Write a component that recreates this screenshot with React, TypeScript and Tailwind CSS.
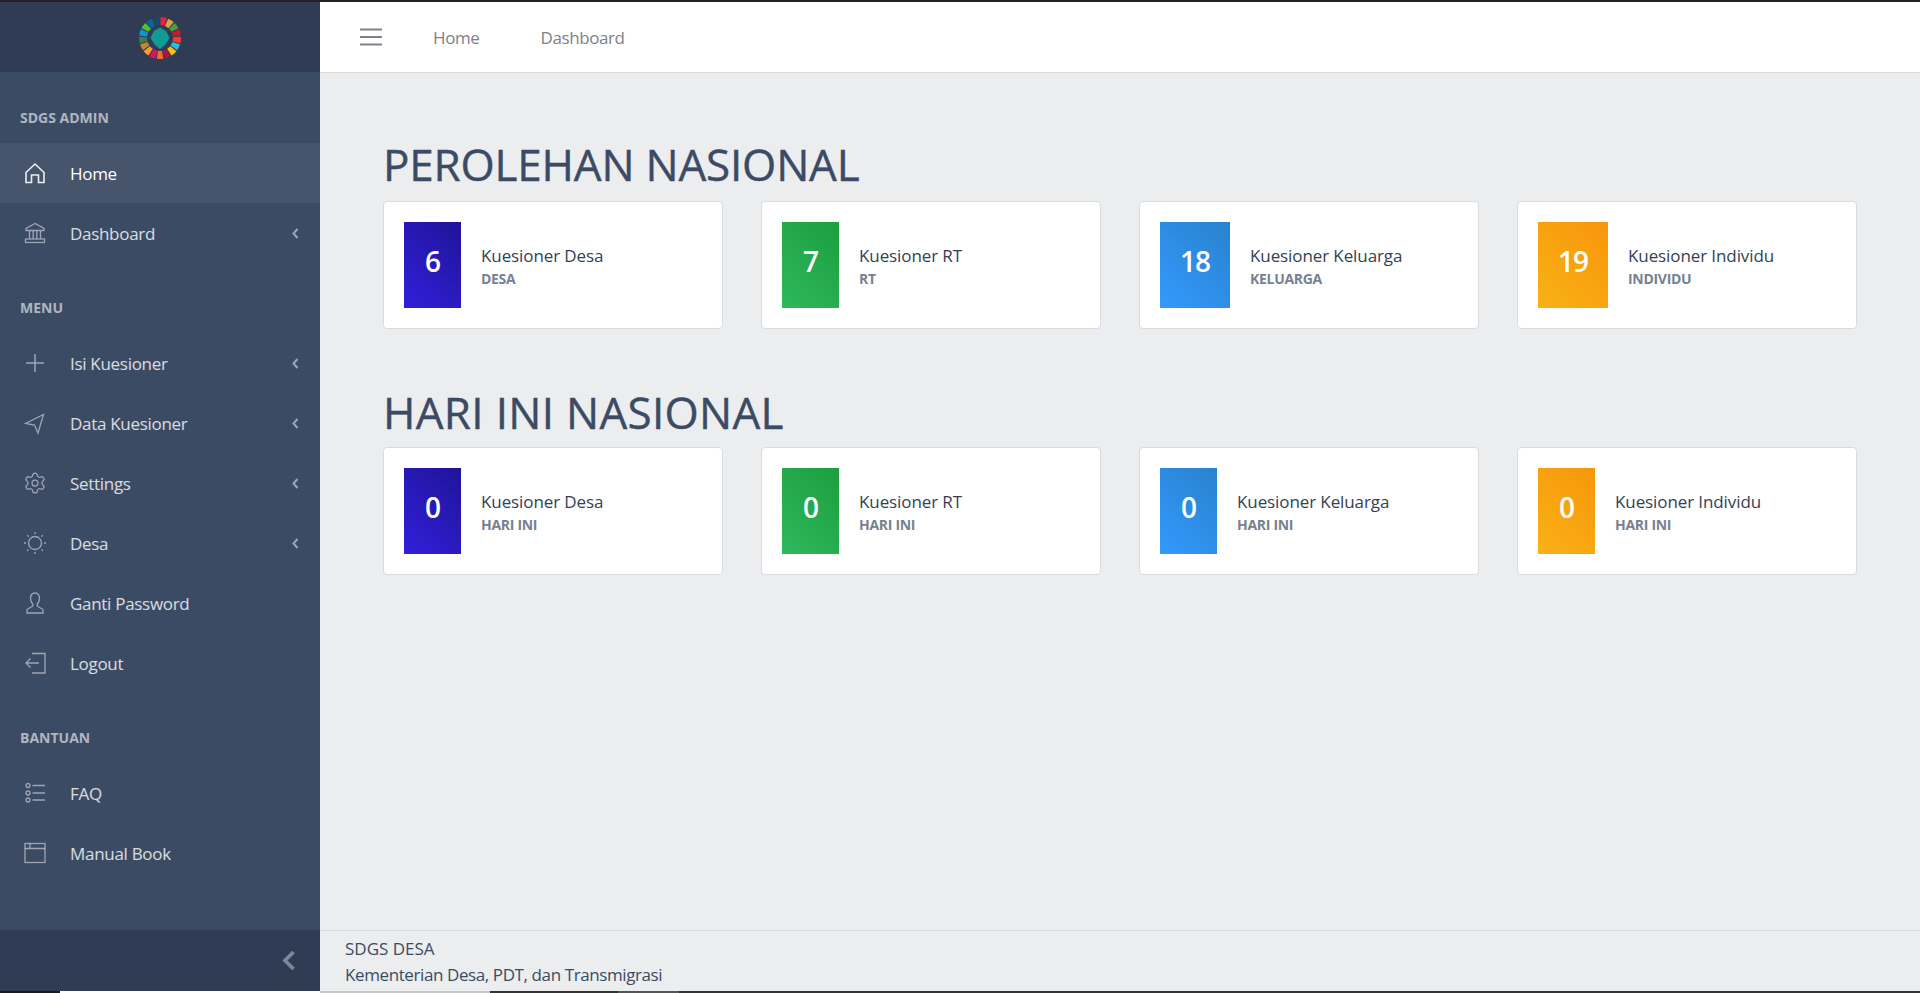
import { Settings } from 'lucide-react';
import type { ReactNode } from 'react';

const SDG_COLORS = ['#E5243B', '#DDA63A', '#4C9F38', '#C5192D', '#FF3A21', '#26BDE2', '#FCC30B', '#A21942', '#FD6925', '#DD1367', '#FD9D24', '#BF8B2E', '#3F7E44', '#0A97D9', '#56C02B', '#00689D', '#19486A'];

function wedge(i: number) {
    const step = (Math.PI * 2) / 17;
    const a0 = i * step + 0.03;
    const a1 = (i + 1) * step - 0.03;
    const pt = (r: number, a: number) => `${(24 + r * Math.sin(a)).toFixed(2)} ${(24 - r * Math.cos(a)).toFixed(2)}`;
    return `M${pt(21, a0)} A21 21 0 0 1 ${pt(21, a1)} L${pt(13, a1)} A13 13 0 0 0 ${pt(13, a0)} Z`;
}

function Logo() {
    return (
        <svg width="48" height="48" viewBox="0 0 48 48" className="mt-[2px]">
            {SDG_COLORS.map((c, i) => (
                <path key={c} d={wedge(i)} fill={c} />
            ))}
            <path d="M24 13.5 L30 17 L33.5 24 L29 31 L24 35 L19 31 L14.5 24 L18 17 Z" fill="#0e9c94" />
        </svg>
    );
}

function Icon({ children, active }: { children: ReactNode; active?: boolean }) {
    return (
        <svg width="24" height="24" viewBox="0 0 24 24" fill="none" stroke="currentColor" strokeWidth="1.3" className={active ? 'text-white/90' : 'text-white/50'}>
            {children}
        </svg>
    );
}

const HomeIcon = (
    <path d="M3 11.5 L12 3 L21 11.5 V21.5 H15.5 V14 H8.5 V21.5 H3 Z" strokeWidth="1.6" />
);
const BankIcon = (
    <>
        <path d="M12 2.5 L3 7.5 V9.5 H21 V7.5 Z" />
        <path d="M6.5 10 V17.5 M10.2 10 V17.5 M13.8 10 V17.5 M17.5 10 V17.5" />
        <rect x="2.5" y="18" width="19" height="3.5" />
    </>
);
const PlusIcon = <path d="M12 3 V21 M3 12 H21" strokeWidth="1.5" />;
const SendIcon = <path d="M2.5 12.5 L20.5 3.5 L15 22 L11.5 14 Z" />;
const SunIcon = (
    <>
        <circle cx="12" cy="12" r="6.5" />
        <path d="M12 1 V3 M12 21 V23 M1 12 H3 M21 12 H23 M4.2 4.2 L5.6 5.6 M18.4 18.4 L19.8 19.8 M4.2 19.8 L5.6 18.4 M18.4 5.6 L19.8 4.2" />
    </>
);
const UserIcon = (
    <path d="M12 2 C8.8 2 7.5 4.5 7.5 7.5 C7.5 10.5 9 12.2 9.8 13.2 V15 L4 18.5 V22 H20 V18.5 L14.2 15 V13.2 C15 12.2 16.5 10.5 16.5 7.5 C16.5 4.5 15.2 2 12 2 Z" />
);
const LogoutIcon = (
    <>
        <path d="M9 2.5 H22 V22 H9" />
        <path d="M3 12 H16 M7.5 7.5 L3 12 L7.5 16.5" />
    </>
);
const ListIcon = (
    <>
        <circle cx="5" cy="4.5" r="2" />
        <circle cx="5" cy="12" r="2" />
        <circle cx="5" cy="19" r="2" />
        <path d="M9.5 4.5 H22 M9.5 12 H22 M9.5 19 H22" />
    </>
);
const WindowIcon = (
    <>
        <rect x="2" y="2.5" width="20" height="19" />
        <path d="M2 7.5 H22 M7 2.5 V7.5" />
    </>
);

function NavItem({ label, icon, active, arrow }: { label: string; icon: ReactNode; active?: boolean; arrow?: boolean }) {
    return (
        <div className={`flex h-[60px] items-center pl-[23px] pr-[21px] ${active ? 'bg-white/5 text-white' : 'text-white/80'}`}>
            <div className="flex w-[47px] shrink-0">
                {icon}
            </div>
            <span className="flex-1 pt-[2px] text-[17px] tracking-[-0.3px]">{label}</span>
            {arrow && (
                <svg width="7" height="11" viewBox="0 0 7 11" fill="none" stroke="currentColor" strokeWidth="2" className="text-white/50">
                    <path d="M5.5 1 L1.5 5.5 L5.5 10" />
                </svg>
            )}
        </div>
    );
}

function NavTitle({ children, first }: { children: ReactNode; first?: boolean }) {
    return (
        <div className={`flex items-end px-5 pb-[16px] ${first ? 'h-[71px]' : 'h-[70px]'}`}>
            <span className="text-[14px] leading-[18px] font-bold uppercase text-white/60">{children}</span>
        </div>
    );
}

function StatCard({ value, title, sub, gradient }: { value: string; title: string; sub: string; gradient: string }) {
    return (
        <div className="flex h-[128px] items-center rounded border border-[#d8dbe0] bg-white px-5">
            <div className={`flex h-[86px] min-w-[57px] items-center justify-center bg-linear-45 px-5 text-[28px] leading-none font-semibold text-white ${gradient}`}>
                <span className="relative -top-[4px] tracking-[-1px]">{value}</span>
            </div>
            <div className="ml-5 mt-[1px] flex flex-col">
                <span className="text-[17px] leading-[25px] tracking-[-0.1px] text-[#343f56]">{title}</span>
                <span className="text-[14px] leading-[21px] font-bold tracking-[-0.3px] text-[#768192] uppercase">{sub}</span>
            </div>
        </div>
    );
}

const BLUE = 'from-[#321fdb] to-[#1f1498]';
const GREEN = 'from-[#2eb85c] to-[#1b9e3e]';
const SKY = 'from-[#3399ff] to-[#2982cc]';
const AMBER = 'from-[#f9b115] to-[#f6960b]';

export default function App() {
    return (
        <div className="flex h-[993px] w-full flex-col overflow-hidden bg-[#ebedef] font-['Open_Sans',sans-serif] text-[#3c4b64]">
            <div className="h-[2px] shrink-0 bg-[#222]" />

            <div className="flex min-h-0 flex-1">
                {/* sidebar */}
                <aside className="flex w-[320px] shrink-0 flex-col bg-[#3c4b64]">
                    <div className="flex h-[70px] items-center justify-center bg-[#303c54]">
                        <Logo />
                    </div>
                    <NavTitle first>SDGS ADMIN</NavTitle>
                    <NavItem label="Home" active icon={<Icon active>{HomeIcon}</Icon>} />
                    <NavItem label="Dashboard" arrow icon={<Icon>{BankIcon}</Icon>} />
                    <NavTitle>MENU</NavTitle>
                    <NavItem label="Isi Kuesioner" arrow icon={<Icon>{PlusIcon}</Icon>} />
                    <NavItem label="Data Kuesioner" arrow icon={<Icon>{SendIcon}</Icon>} />
                    <NavItem label="Settings" arrow icon={<Settings size={24} strokeWidth={1.25} className="text-white/50" />} />
                    <NavItem label="Desa" arrow icon={<Icon>{SunIcon}</Icon>} />
                    <NavItem label="Ganti Password" icon={<Icon>{UserIcon}</Icon>} />
                    <NavItem label="Logout" icon={<Icon>{LogoutIcon}</Icon>} />
                    <NavTitle>BANTUAN</NavTitle>
                    <NavItem label="FAQ" icon={<Icon>{ListIcon}</Icon>} />
                    <NavItem label="Manual Book" icon={<Icon>{WindowIcon}</Icon>} />
                    <div className="mt-auto flex h-[61px] items-center justify-end bg-[#303c54] pr-[24px]">
                        <svg width="14" height="21" viewBox="0 0 14 21" fill="none" stroke="#7d8899" strokeWidth="3.6">
                            <path d="M11.5 2 L3 10.5 L11.5 19" />
                        </svg>
                    </div>
                </aside>

                <div className="flex min-w-0 flex-1 flex-col">
                    {/* top bar */}
                    <header className="flex h-[71px] shrink-0 items-center border-b border-[#d8dbe0] bg-white pl-[40px] text-[17px] tracking-[-0.4px] text-[#80808a]">
                        <svg width="22" height="18" viewBox="0 0 22 18" fill="none" stroke="#80808a" strokeWidth="2">
                            <path d="M0 1.5 H22 M0 9 H22 M0 16.5 H22" />
                        </svg>
                        <span className="ml-[51px] pt-[2px]">Home</span>
                        <span className="ml-[61px] pt-[2px]">Dashboard</span>
                    </header>

                    {/* content */}
                    <main className="flex-1 px-[63px] pt-[66px]">
                        <h1 className="mb-[12px] text-[44px] leading-[50px] tracking-[-0.2px] [-webkit-text-stroke:0.4px_#3c4b64]">PEROLEHAN NASIONAL</h1>
                        <div className="grid grid-cols-4 gap-[38px]">
                            <StatCard value="6" title="Kuesioner Desa" sub="DESA" gradient={BLUE} />
                            <StatCard value="7" title="Kuesioner RT" sub="RT" gradient={GREEN} />
                            <StatCard value="18" title="Kuesioner Keluarga" sub="KELUARGA" gradient={SKY} />
                            <StatCard value="19" title="Kuesioner Individu" sub="INDIVIDU" gradient={AMBER} />
                        </div>
                        <h1 className="mt-[58px] mb-[10px] text-[44px] leading-[50px] tracking-[0.3px] [-webkit-text-stroke:0.4px_#3c4b64]">HARI INI NASIONAL</h1>
                        <div className="grid grid-cols-4 gap-[38px]">
                            <StatCard value="0" title="Kuesioner Desa" sub="HARI INI" gradient={BLUE} />
                            <StatCard value="0" title="Kuesioner RT" sub="HARI INI" gradient={GREEN} />
                            <StatCard value="0" title="Kuesioner Keluarga" sub="HARI INI" gradient={SKY} />
                            <StatCard value="0" title="Kuesioner Individu" sub="HARI INI" gradient={AMBER} />
                        </div>
                    </main>

                    {/* footer */}
                    <footer className="h-[61px] shrink-0 border-t border-[#d8dbe0] pt-[5px] pl-[25px] text-[17px] leading-[26px]">
                        <div>SDGS DESA</div>
                        <div className="tracking-[-0.4px]">Kementerian Desa, PDT, dan Transmigrasi</div>
                    </footer>
                </div>
            </div>

            {/* window strip along the bottom edge */}
            <div className="flex h-[2px] shrink-0 bg-[#333]">
                <div className="w-[60px] bg-[#1a1a1a]" />
                <div className="w-[260px] bg-white" />
                <div className="w-[170px] bg-[#c8c8c8]" />
                <div className="ml-[128px] w-[61px] bg-[#555]" />
            </div>
        </div>
    );
}
